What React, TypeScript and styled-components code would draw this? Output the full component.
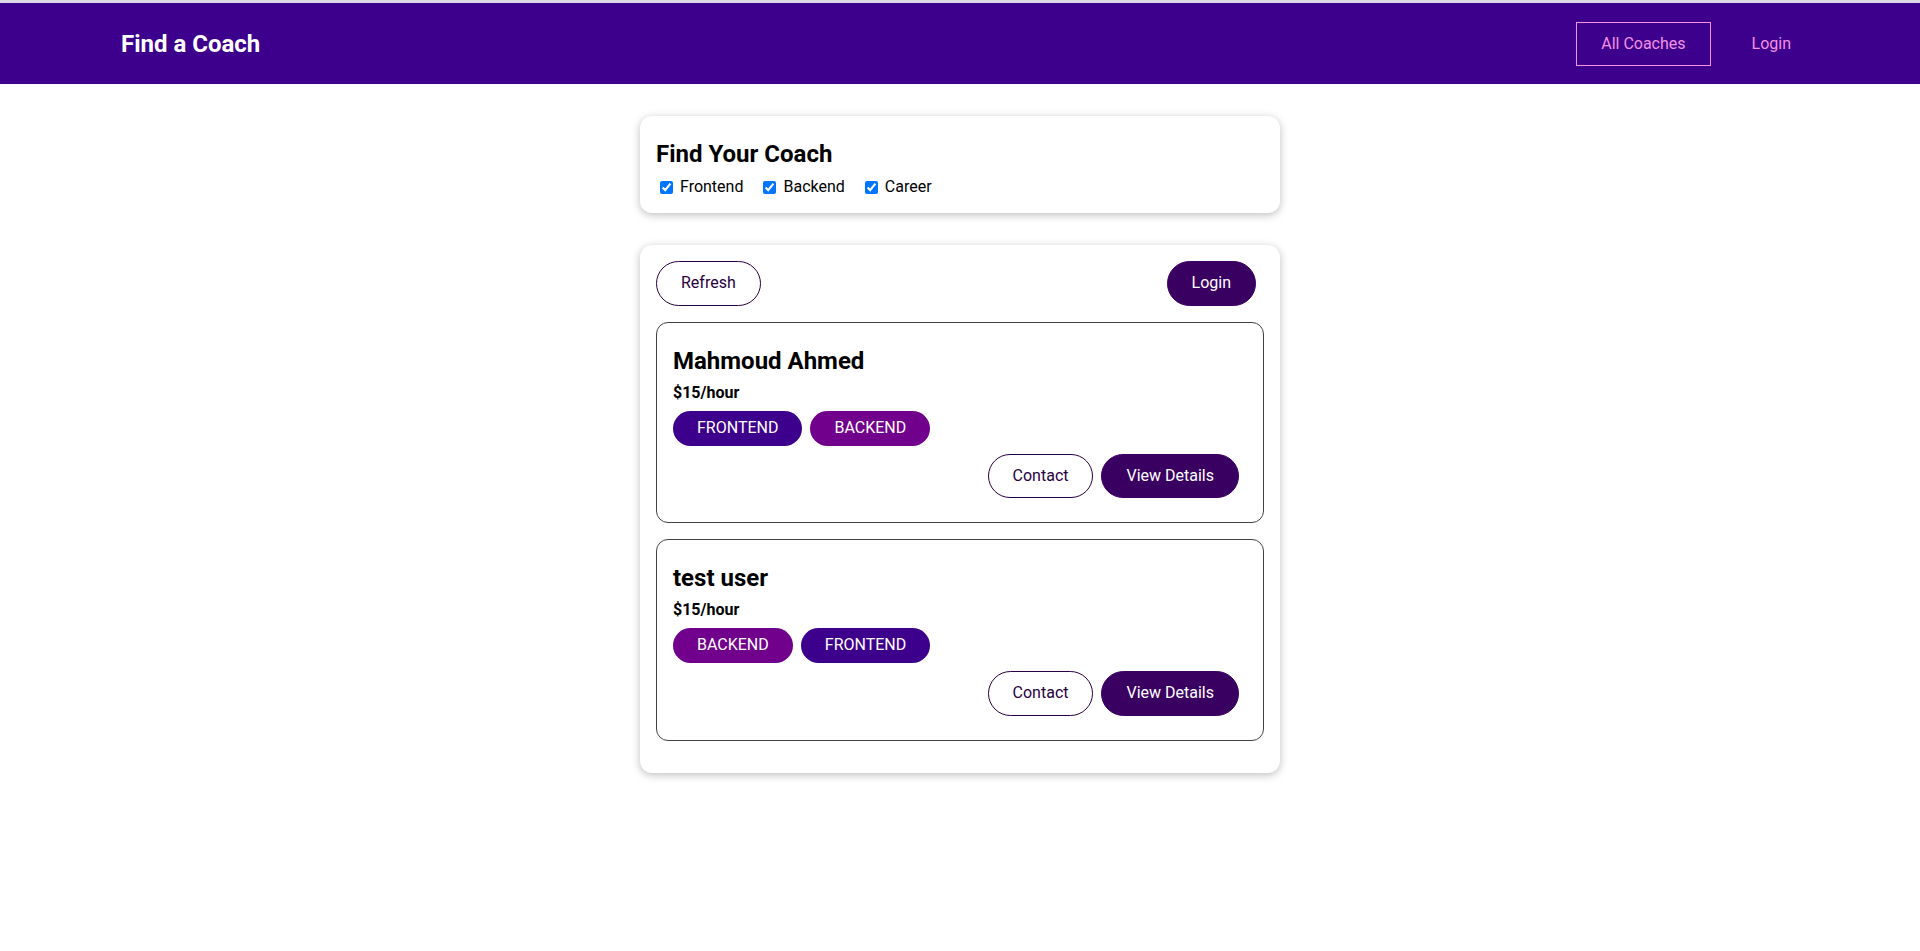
import React, { useState } from 'react';
import styled, { createGlobalStyle, css } from 'styled-components';

const GlobalStyle = createGlobalStyle`
  * {
    box-sizing: border-box;
  }
  html {
    font-family: Roboto, 'Noto Sans', sans-serif;
    line-height: 1.185;
  }
  body {
    margin: 0;
    background: #fff;
  }
`;

const TopStrip = styled.div`
  height: 3px;
  background-color: #dcd9e4;
`;

const Header = styled.header`
  width: 100%;
  height: 81px;
  background-color: #3d008d;
  display: flex;
  justify-content: center;
  align-items: center;
`;

const Nav = styled.nav`
  width: 90%;
  margin: auto;
  padding-top: 1px;
  display: flex;
  justify-content: space-between;
  align-items: center;
`;

const Brand = styled.h1`
  margin: 0;
  font-size: 24px;
  font-weight: 700;

  a {
    color: white;
    text-decoration: none;
    display: inline-block;
    padding: 0.75rem 1.5rem;
    border: 1px solid transparent;
  }
`;

const NavList = styled.ul`
  list-style: none;
  margin: 0;
  padding: 0;
  display: flex;
  justify-content: center;
  align-items: center;
`;

const NavItem = styled.li`
  margin: 0 0.5rem;
`;

const NavLink = styled.a<{ $active?: boolean }>`
  text-decoration: none;
  color: #f391e3;
  display: inline-block;
  padding: 0.75rem 1.5rem;
  border: 1px solid ${(p) => (p.$active ? '#f391e3' : 'transparent')};
  font-size: 16px;
  cursor: pointer;
`;

const Card = styled.div`
  border-radius: 12px;
  box-shadow: 0 2px 8px rgba(0, 0, 0, 0.26);
  padding: 1rem;
  margin: 2rem auto;
  max-width: 40rem;
  background: #fff;
`;

const FilterTitle = styled.h2`
  margin: 0.5rem 0;
  font-size: 24px;
  font-weight: 700;
`;

const FilterOption = styled.span`
  margin-right: 1rem;
  font-size: 16px;
  line-height: 20px;

  input,
  label {
    vertical-align: middle;
  }

  label {
    margin-left: 0.25rem;
  }
`;

const Controls = styled.div`
  display: flex;
  justify-content: space-between;
`;

const Button = styled.button<{ $mode?: 'outline' | 'solid' }>`
  text-decoration: none;
  padding: 0.75rem 1.5rem;
  font: inherit;
  font-size: 16px;
  background-color: #3a0061;
  border: 1px solid #3a0061;
  color: white;
  cursor: pointer;
  border-radius: 30px;
  margin-right: 0.5rem;
  display: inline-block;

  ${(p) =>
    p.$mode === 'outline' &&
    css`
      background-color: transparent;
      border-color: #270041;
      color: #270041;
    `}
`;

const CoachList = styled.ul`
  list-style: none;
  margin: 0;
  padding: 0;
`;

const CoachItem = styled.li`
  margin: 1rem 0;
  border: 1px solid #424242;
  border-radius: 12px;
  padding: 1rem;
`;

const CoachName = styled.h3`
  font-size: 1.5rem;
  margin: 0.5rem 0;
`;

const Rate = styled.h4`
  font-size: 16px;
  margin: 0.5rem 0;
`;

const Row = styled.div`
  margin: 0.5rem 0;
`;

const Actions = styled(Row)`
  display: flex;
  justify-content: flex-end;
`;

const badgeColors: Record<string, string> = {
  frontend: '#3d008d',
  backend: '#71008d',
  career: '#8d006e',
};

const Badge = styled.span<{ $type: string }>`
  background-color: ${(p) => badgeColors[p.$type] || '#ccc'};
  color: ${(p) => (badgeColors[p.$type] ? 'white' : '#252525')};
  border-radius: 30px;
  padding: 0.5rem 1.5rem;
  display: inline-block;
  margin-right: 0.5rem;
  font-size: 16px;
`;

interface Coach {
  id: string;
  name: string;
  rate: number;
  areas: string[];
}

const coaches: Coach[] = [
  { id: 'c1', name: 'Mahmoud Ahmed', rate: 15, areas: ['frontend', 'backend'] },
  { id: 'c2', name: 'test user', rate: 15, areas: ['backend', 'frontend'] },
];

const filterNames = [
  { id: 'frontend', label: 'Frontend' },
  { id: 'backend', label: 'Backend' },
  { id: 'career', label: 'Career' },
];

const App = () => {
  const [filters, setFilters] = useState<Record<string, boolean>>({
    frontend: true,
    backend: true,
    career: true,
  });

  const visible = coaches.filter((c) => c.areas.some((a) => filters[a]));

  return (
    <>
      <GlobalStyle />
      <TopStrip />
      <Header>
        <Nav>
          <Brand>
            <a href="#">Find a Coach</a>
          </Brand>
          <NavList>
            <NavItem>
              <NavLink $active>All Coaches</NavLink>
            </NavItem>
            <NavItem>
              <NavLink>Login</NavLink>
            </NavItem>
          </NavList>
        </Nav>
      </Header>
      <main>
        <section>
          <Card>
            <FilterTitle>Find Your Coach</FilterTitle>
            {filterNames.map((f) => (
              <FilterOption key={f.id}>
                <input
                  type="checkbox"
                  id={f.id}
                  checked={filters[f.id]}
                  onChange={(e) =>
                    setFilters({ ...filters, [f.id]: e.target.checked })
                  }
                />
                <label htmlFor={f.id}>{f.label}</label>
              </FilterOption>
            ))}
          </Card>
        </section>
        <section>
          <Card>
            <Controls>
              <Button $mode="outline">Refresh</Button>
              <Button>Login</Button>
            </Controls>
            <CoachList>
              {visible.map((coach) => (
                <CoachItem key={coach.id}>
                  <CoachName>{coach.name}</CoachName>
                  <Rate>${coach.rate}/hour</Rate>
                  <Row>
                    {coach.areas.map((area) => (
                      <Badge key={area} $type={area}>
                        {area.toUpperCase()}
                      </Badge>
                    ))}
                  </Row>
                  <Actions>
                    <Button $mode="outline">Contact</Button>
                    <Button>View Details</Button>
                  </Actions>
                </CoachItem>
              ))}
            </CoachList>
          </Card>
        </section>
      </main>
    </>
  );
};

export default App;
